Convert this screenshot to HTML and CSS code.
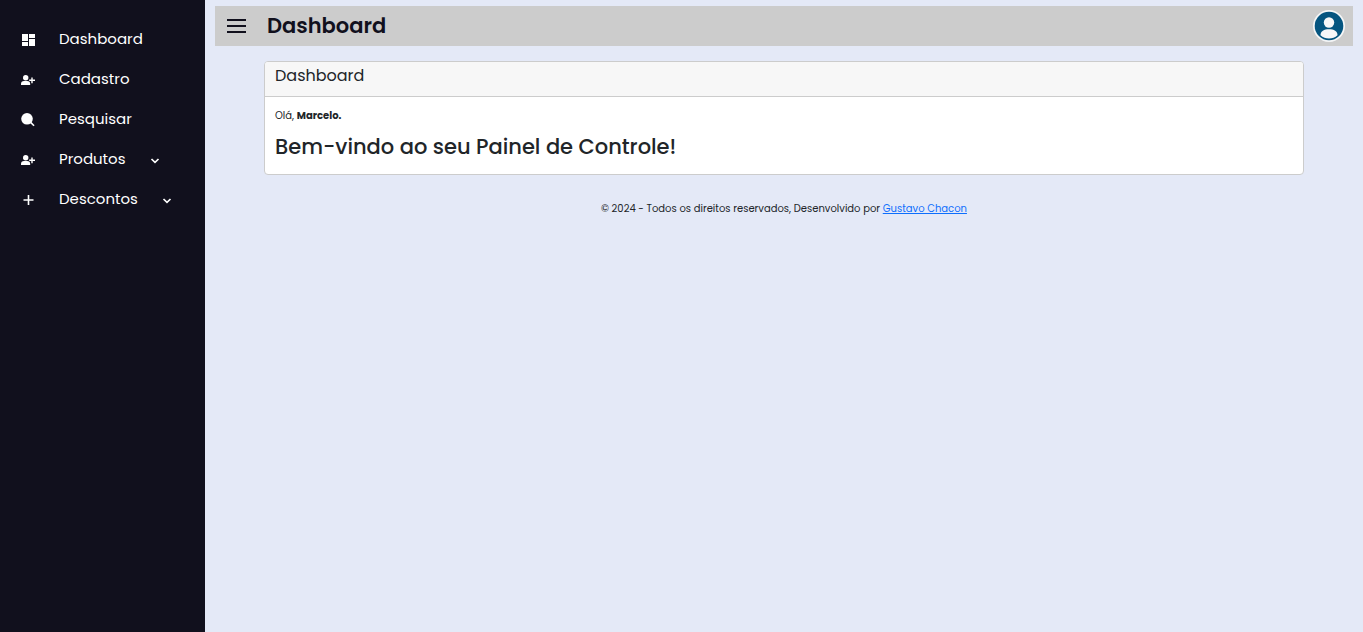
FILE: index.html
```html
<!DOCTYPE html>
<html lang="pt-BR">
<head>
<meta charset="utf-8">
<meta name="viewport" content="width=device-width, initial-scale=1">
<title>Dashboard</title>
<link rel="stylesheet" href="styles.css">
</head>
<body>
<div class="layout">
  <nav class="sidebar" aria-label="Menu principal">
    <ul class="menu">
      <li><a class="menu-link" href="#">
        <span class="menu-icon"><svg width="14" height="14" viewBox="0 0 14 14" fill="currentColor"><path d="M1 1h6v7H1zM8 1h6v4H8zM1 9h6v4H1zM8 6h6v7H8z"/></svg></span>
        <span>Dashboard</span></a></li>
      <li><a class="menu-link" href="#">
        <span class="menu-icon"><svg width="14" height="14" viewBox="0 0 14 14" fill="currentColor"><circle cx="4.700" cy="4.800" r="2.700"/><path d="M0 12v-1a3 3 0 0 1 3-3h3.200a3 3 0 0 1 3 3v1zM10.300 4.500h1.400v2H14V8h-2.300v2.200h-1.400V8H8.200V6.500h2.100z"/></svg></span>
        <span>Cadastro</span></a></li>
      <li><a class="menu-link" href="#">
        <span class="menu-icon"><svg width="14" height="14" viewBox="0 0 14 14" fill="currentColor"><circle cx="6" cy="5.800" r="5.800"/><path d="m8.800 9.800 1.200-1.200 3.600 3.600-1.100 1.100z"/></svg></span>
        <span>Pesquisar</span></a></li>
      <li><button class="menu-link" type="button" aria-expanded="false">
        <span class="menu-icon"><svg width="14" height="14" viewBox="0 0 14 14" fill="currentColor"><circle cx="4.700" cy="4.800" r="2.700"/><path d="M0 12v-1a3 3 0 0 1 3-3h3.200a3 3 0 0 1 3 3v1zM10.300 4.500h1.400v2H14V8h-2.300v2.200h-1.400V8H8.200V6.500h2.100z"/></svg></span>
        <span>Produtos</span>
        <svg class="chevron" width="10" height="10" viewBox="0 0 10 10" fill="none" stroke="currentColor" stroke-width="1.700"><path d="m1.500 4 3.500 3.300L8.500 4"/></svg></button></li>
      <li><button class="menu-link" type="button" aria-expanded="false">
        <span class="menu-icon"><svg width="14" height="14" viewBox="0 0 14 14" fill="none" stroke="currentColor" stroke-width="1.600"><path d="M7.500 2v10M2.500 7h10"/></svg></span>
        <span>Descontos</span>
        <svg class="chevron" width="10" height="10" viewBox="0 0 10 10" fill="none" stroke="currentColor" stroke-width="1.700"><path d="m1.500 4 3.500 3.300L8.500 4"/></svg></button></li>
    </ul>
  </nav>
  <div class="content">
    <header class="topbar">
      <button class="icon-button" type="button" aria-label="Abrir menu">
        <svg width="20" height="20" viewBox="0 0 20 20" fill="currentColor"><path d="M0 3h19v2H0zM0 9h19v2H0zM0 15h19v2H0z"/></svg>
      </button>
      <h1 class="topbar-title">Dashboard</h1>
      <button class="icon-button avatar" type="button" aria-label="Perfil">
        <svg width="32" height="32" viewBox="0 0 32 32"><circle cx="16" cy="16" r="16" fill="#f5f6f7"/><circle cx="16" cy="16" r="14.300" fill="#055580"/><circle cx="16" cy="12.500" r="5.200" fill="#f7f7f8"/><path d="M7.500 25.200C7.500 21 11 19.200 16 19.200s8.500 1.800 8.500 6a12.500 12.500 0 0 1-17 0z" fill="#f7f7f8"/></svg>
      </button>
    </header>
    <main class="page">
      <section class="card">
        <h2 class="card-header">Dashboard</h2>
        <div class="card-body">
          <p class="greeting">Olá, <strong>Marcelo.</strong></p>
          <p class="welcome">Bem-vindo ao seu Painel de Controle!</p>
        </div>
      </section>
    </main>
    <footer class="footer">© 2024 - Todos os direitos reservados, Desenvolvido por <a href="#">Gustavo Chacon</a></footer>
  </div>
</div>
</body>
</html>
```
FILE: styles.css
```css
* { box-sizing: border-box; margin: 0; padding: 0; }

body {
  font-family: Poppins, Inter, "Open Sans", sans-serif;
  font-size: 10px;
  line-height: 16px;
  color: #212529;
  background: #e4e9f7;
}

button { font: inherit; color: inherit; background: none; border: 0; cursor: pointer; }

.layout { display: flex; min-height: 100vh; }

.sidebar { flex: none; width: 205px; padding: 19px 0; background: #11101d; }
.menu { list-style: none; }
.menu-link {
  display: flex;
  align-items: center;
  width: 100%;
  height: 40px;
  color: #fff;
  font-size: 15px;
  text-decoration: none;
}
.menu-icon { display: flex; flex: none; width: 59px; padding: 2px 0 0 21px; }
.chevron { margin: 2px 0 0 24px; }

.content { flex: 1; min-width: 0; padding: 6px 10px; }

.topbar {
  display: flex;
  align-items: center;
  height: 40px;
  padding: 0 8px 0 12px;
  color: #11101d;
  background: #ccc;
}
.icon-button { display: flex; }
.topbar-title { margin-left: 20px; font-size: 21px; line-height: 32px; font-weight: 600; }
.avatar { margin-left: auto; }

.page { padding: 15px 49px 0; }
.card { overflow: hidden; background: #fff; border: 1px solid #ccc; border-radius: 4px; }
.card-header {
  padding: 4px 10px 10px;
  font-size: 16px;
  line-height: 20px;
  font-weight: 400;
  background: #f7f7f7;
  border-bottom: 1px solid #ccc;
}
.card-body { padding: 11px 10px 12px; }
.greeting { margin-bottom: 8px; }
.welcome { font-size: 21px; line-height: 30px; font-weight: 500; }

.footer { padding: 26px 10px; text-align: center; }
.footer a { color: #0d6efd; }
```
